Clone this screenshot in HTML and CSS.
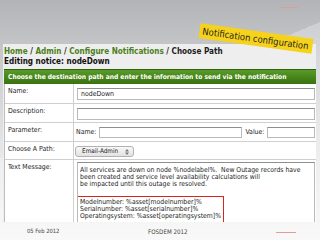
FILE: index.html
```html
<!DOCTYPE html>
<html lang="en">
<head>
    <meta charset="UTF-8">
    <meta name="viewport" content="width=device-width, initial-scale=1.0">
    <title>Notification configuration</title>
    <link rel="stylesheet" href="styles.css">
</head>
<body>
    <div class="slide">
        <div class="top">
            <span class="rule"></span>
        </div>
        <div class="shot">
            <div class="crumbs">
                <span class="link">Home</span> / <span class="link">Admin</span> / <span class="link">Configure Notifications</span> / Choose Path
            </div>
            <div class="editing">Editing notice: nodeDown</div>
            <div class="bar">Choose the destination path and enter the information to send via the notification</div>
            <div class="form">
                <div class="row row-name">
                    <div class="label">Name:</div>
                    <div class="value"><div class="field">nodeDown</div></div>
                </div>
                <div class="row row-desc">
                    <div class="label">Description:</div>
                    <div class="value"><div class="field"></div></div>
                </div>
                <div class="row row-param">
                    <div class="label">Parameter:</div>
                    <div class="value param">
                        <span class="sub">Name:</span>
                        <div class="field field-pname"></div>
                        <span class="sub">Value:</span>
                        <div class="field field-pvalue"></div>
                    </div>
                </div>
                <div class="row row-path">
                    <div class="label">Choose A Path:</div>
                    <div class="value">
                        <div class="select">
                            Email-Admin
                            <svg class="arrows" width="4" height="6" viewBox="0 0 4 6">
                                <path d="M0 2.4 L2 0 L4 2.4 Z M0 3.6 L2 6 L4 3.6 Z" fill="#777"/>
                            </svg>
                        </div>
                    </div>
                </div>
                <div class="row row-text">
                    <div class="label">Text Message:</div>
                    <div class="value">
                        <div class="textarea">
                            <p class="msg">All services are down on node %nodelabel%.&nbsp; New Outage records have<br>been created and service level availability calculations will<br>be impacted until this outage is resolved.</p>
                            <p class="asset">Modelnumber: %asset[modelnumber]%<br>Serialnumber: %asset[serialnumber]%<br>Operatingsystem: %asset[operatingsystem]%</p>
                        </div>
                    </div>
                </div>
            </div>
        </div>
        <div class="footer">
            <span class="date">05 Feb 2012</span>
            <span class="event">FOSDEM 2012</span>
            <span class="rule"></span>
        </div>
        <div class="sticker">Notification configuration</div>
    </div>
</body>
</html>
```

FILE: styles.css
```css
html, body {
    margin: 0;
    padding: 0;
}
body {
    width: 320px;
    height: 240px;
    overflow: hidden;
    font-family: "DejaVu Sans Condensed", "DejaVu Sans", sans-serif;
    font-stretch: condensed;
    color: #1c1c1c;
    background:
        linear-gradient(157deg, rgba(255,255,255,0) 42%, rgba(255,255,255,.28) 42%),
        linear-gradient(180deg, #b2b4b7 0%, #c4c6c8 20%, #e4e5e6 60%, #f6f6f6 100%);
}
.slide {
    position: relative;
    width: 320px;
    height: 240px;
    display: flex;
    flex-direction: column;
}
.top {
    height: 44px;
    display: flex;
    justify-content: flex-end;
    align-items: flex-start;
    padding: 7px 22px 0 0;
    box-sizing: border-box;
}
.rule {
    width: 18px;
    height: 1px;
    background: #e59a9a;
}
.shot {
    margin-left: 3px;
    width: 313px;
    height: 178px;
    overflow: hidden;
    background: #eeeeee;
}
.crumbs {
    padding: 2px 0 0 1px;
    font-size: 8.1px;
    line-height: 10px;
    font-weight: bold;
    white-space: nowrap;
}
.link {
    color: #4c7f20;
}
.editing {
    padding-left: 1px;
    font-size: 8.1px;
    line-height: 10px;
    font-weight: bold;
    color: #111;
}
.bar {
    margin: 3px 0 0 1px;
    height: 15px;
    line-height: 15px;
    padding-left: 4px;
    box-sizing: border-box;
    border-top: 1px solid #2f620f;
    background: linear-gradient(180deg, #5a9a2b 0%, #468418 55%, #3a7212 100%);
    color: #fff;
    font-size: 6.65px;
    font-weight: bold;
    white-space: nowrap;
    overflow: hidden;
}
.form {
    margin-left: 1px;
    border-left: 1px solid #bdbdbd;
    background: #fff;
}
.row {
    display: grid;
    grid-template-columns: 69px 1fr;
    box-sizing: border-box;
    border-bottom: 1px solid #cfcfcf;
    font-size: 6.9px;
    line-height: 7px;
}
.row-name { height: 20px; }
.row-desc { height: 19px; }
.row-param { height: 19px; }
.row-path { height: 18px; }
.row-text { height: 80px; border-bottom: none; }
.label {
    border-right: 1px solid #cfcfcf;
    padding: 4px 0 0 3px;
    white-space: nowrap;
}
.value {
    padding: 4px 1px 0 3px;
}
.field {
    height: 12px;
    box-sizing: border-box;
    border: 1px solid #b9b9b9;
    border-top-color: #8e8e8e;
    background: #fff;
    padding-left: 3px;
    line-height: 10px;
}
.param {
    display: flex;
    align-items: center;
    gap: 3px;
    padding-left: 2px;
    padding-top: 3px;
    height: 13px;
}
.param .field {
    height: 11px;
}
.field-pname {
    width: 143px;
}
.field-pvalue {
    flex: 1;
}
.row-path .value {
    padding-top: 4px;
    padding-left: 1px;
}
.select {
    display: inline-flex;
    align-items: center;
    gap: 7px;
    height: 9px;
    padding: 0 4px 0 6px;
    border: 1px solid #b2b2b2;
    border-radius: 3px;
    background: linear-gradient(180deg, #f8f8f8 0%, #e2e2e2 100%);
    font-size: 6.4px;
    line-height: 9px;
}
.row-text .value {
    padding-top: 2px;
}
.textarea {
    height: 80px;
    box-sizing: border-box;
    border: 1px solid #b9b9b9;
    border-top-color: #8e8e8e;
    padding: 4px 0 0 2px;
    font-size: 6.8px;
    line-height: 7px;
    white-space: nowrap;
    overflow: hidden;
}
.msg {
    margin: 0;
}
.asset {
    margin: 8px 0 0 -3px;
    width: 147px;
    box-sizing: border-box;
    border: 1px solid #d8261f;
    padding: 2px 0 2px 2px;
}
.footer {
    flex: 1;
    display: flex;
    align-items: center;
    padding-left: 27px;
    font-size: 5.8px;
    color: #444;
}
.date {
    width: 121px;
}
.event {
    font-size: 6.2px;
}
.footer .rule {
    margin: 3px 24px 0 auto;
    width: 20px;
}
.sticker {
    position: absolute;
    left: 199px;
    top: 31px;
    width: 114px;
    height: 15px;
    line-height: 15px;
    padding-left: 3px;
    box-sizing: border-box;
    background: #f6d21a;
    color: #222;
    font-size: 9.4px;
    white-space: nowrap;
    transform: rotate(8deg);
}
```
